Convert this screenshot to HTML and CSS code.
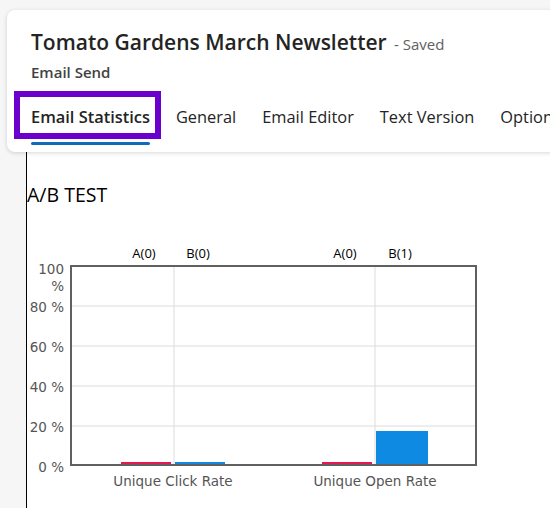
FILE: index.html
```html
<!DOCTYPE html>
<html lang="en">
<head>
  <meta charset="UTF-8" />
  <title>Tomato Gardens March Newsletter - Email Send</title>
  <link rel="stylesheet" href="styles.css">
</head>
<body>

<header class="card">
  <h1 class="title">Tomato Gardens March Newsletter <span class="status">- Saved</span></h1>
  <div class="entity">Email Send</div>
  <nav class="tabs">
    <span class="tab active">Email Statistics</span>
    <span class="tab">General</span>
    <span class="tab">Email Editor</span>
    <span class="tab">Text Version</span>
    <span class="tab">Options</span>
  </nav>
</header>

<main class="content">
  <h2 class="section-title">A/B TEST</h2>

  <svg class="chart" width="523" height="272" viewBox="27 236 523 272">
    <g class="grid">
      <line x1="72" y1="306" x2="475" y2="306" />
      <line x1="72" y1="346" x2="475" y2="346" />
      <line x1="72" y1="386" x2="475" y2="386" />
      <line x1="72" y1="426" x2="475" y2="426" />
      <line x1="174" y1="266" x2="174" y2="465" />
      <line x1="375" y1="266" x2="375" y2="465" />
    </g>

    <rect class="bar-a" x="121" y="462" width="50" height="3" />
    <rect class="bar-b" x="175" y="462" width="50" height="3" />
    <rect class="bar-a" x="322" y="462" width="50" height="3" />
    <rect class="bar-b" x="376" y="431" width="52" height="34" />

    <rect class="frame" x="71" y="266" width="405" height="199" />

    <g class="bar-label">
      <text x="144" y="258">A(0)</text>
      <text x="198" y="258">B(0)</text>
      <text x="345" y="258">A(0)</text>
      <text x="400" y="258">B(1)</text>
    </g>

    <g class="axis-y">
      <text x="64" y="274">100</text>
      <text x="64" y="291">%</text>
      <text x="64" y="312">80 %</text>
      <text x="64" y="352">60 %</text>
      <text x="64" y="392">40 %</text>
      <text x="64" y="432">20 %</text>
      <text x="64" y="472">0 %</text>
    </g>

    <g class="axis-x">
      <text x="173" y="486">Unique Click Rate</text>
      <text x="375" y="486">Unique Open Rate</text>
    </g>
  </svg>
</main>

</body>
</html>
```

FILE: styles.css
```css
html, body {
  overflow: hidden;
}
body {
  margin: 0;
  background-color: #f6f6f6;
  font-family: "Open Sans", "Noto Sans", sans-serif;
  color: #242424;
}
.card {
  margin: 10px -80px 0 7px;
  padding: 18px 0 23px 24px;
  background-color: #fff;
  border-radius: 8px;
  box-shadow: 0 1px 4px rgba(0, 0, 0, 0.16);
  position: relative;
  z-index: 1;
}
.title {
  margin: 0;
  font-size: 21px;
  font-weight: 600;
  line-height: 28px;
  color: #242424;
}
.status {
  font-size: 15px;
  font-weight: 400;
  color: #616161;
  margin-left: 2px;
}
.entity {
  margin-top: 4px;
  font-size: 15px;
  font-weight: 600;
  color: #424242;
  line-height: 20px;
}
.tabs {
  display: flex;
  gap: 26px;
  margin-top: 23px;
}
.tab {
  position: relative;
  font-size: 16.4px;
  line-height: 24px;
  color: #242424;
  white-space: nowrap;
}
.tab.active {
  font-weight: 600;
}
.tab.active::before {
  content: "";
  position: absolute;
  left: -17px;
  right: -11px;
  top: -14px;
  bottom: -10px;
  border: 6px solid #6b00cc;
}
.tab.active::after {
  content: "";
  position: absolute;
  left: 0;
  right: 0;
  bottom: -16px;
  height: 3px;
  border-radius: 2px;
  background-color: #0f6cbd;
}
.content {
  margin-left: 26px;
  border-left: 1px solid #000;
  background-color: #fff;
  height: 360px;
}
.section-title {
  margin: 0;
  padding-top: 31px;
  font-size: 19.5px;
  font-weight: 400;
  line-height: 24px;
  color: #000;
}
.chart {
  display: block;
  margin-top: 29px;
}
.grid line {
  stroke: #dcdcdc;
  stroke-width: 1;
}
.frame {
  fill: none;
  stroke: #606060;
  stroke-width: 2;
}
.bar-a {
  fill: #e8174f;
}
.bar-b {
  fill: #0e8ae2;
}
.bar-label text {
  font-family: "Open Sans", sans-serif;
  font-size: 13px;
  fill: #000;
  text-anchor: middle;
}
.axis-y text {
  font-family: "DejaVu Sans", sans-serif;
  font-size: 13.5px;
  fill: #555;
  text-anchor: end;
}
.axis-x text {
  font-family: "DejaVu Sans", sans-serif;
  font-size: 13.5px;
  fill: #555;
  text-anchor: middle;
}
```
